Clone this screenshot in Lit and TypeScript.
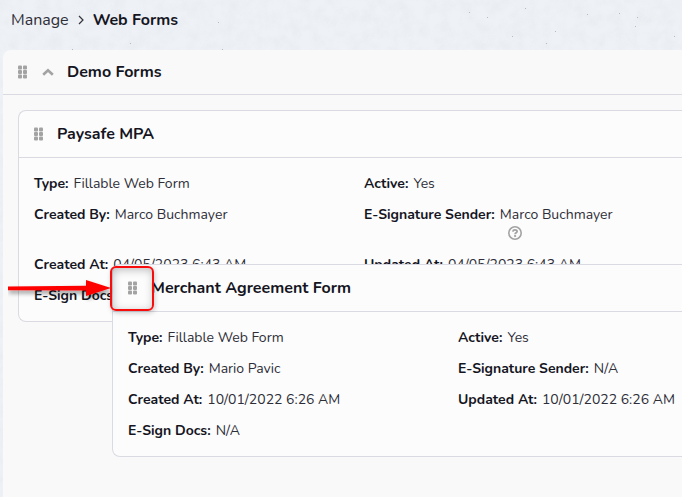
import { LitElement, html, svg, css, nothing } from "lit";
import { customElement, property } from "lit/decorators.js";

interface Field {
  label: string;
  value: string;
  help?: boolean;
}

const paysafe: Field[] = [
  { label: "Type:", value: "Fillable Web Form" },
  { label: "Active:", value: "Yes" },
  { label: "Created By:", value: "Marco Buchmayer" },
  { label: "E-Signature Sender:", value: "Marco Buchmayer", help: true },
  { label: "Created At:", value: "04/05/2023 6:43 AM" },
  { label: "Updated At:", value: "04/05/2023 6:43 AM" },
  { label: "E-Sign Docs:", value: "N/A" },
];

const merchant: Field[] = [
  { label: "Type:", value: "Fillable Web Form" },
  { label: "Active:", value: "Yes" },
  { label: "Created By:", value: "Mario Pavic" },
  { label: "E-Signature Sender:", value: "N/A" },
  { label: "Created At:", value: "10/01/2022 6:26 AM" },
  { label: "Updated At:", value: "10/01/2022 6:26 AM" },
  { label: "E-Sign Docs:", value: "N/A" },
];

const controls = css`
  button {
    display: flex;
    padding: 0;
    border: 0;
    background: none;
    color: #a3a3a3;
    cursor: pointer;
  }
  button.grip {
    cursor: grab;
  }
  h2,
  h3 {
    margin: 0;
    font-size: 16px;
    line-height: 24px;
    font-weight: 700;
    white-space: nowrap;
  }
`;

const gripIcon = html`<svg width="10" height="14" viewBox="0 0 10 14" fill="currentColor" aria-hidden="true">
  ${[0.4, 5, 9.6].map((y) => [0, 5].map((x) => svg`<rect x=${x} y=${y} width="4" height="4" rx="1" />`))}
</svg>`;

@customElement("form-card")
export class FormCard extends LitElement {
  @property() heading = "";
  @property({ attribute: false }) fields: Field[] = [];

  static styles = [
    controls,
    css`
      :host {
        display: block;
        box-sizing: border-box;
        border: 1px solid #d9dae2;
        border-right: 0;
        border-radius: 8px 0 0 8px;
        background: #fcfcfc;
      }
      header {
        display: flex;
        align-items: center;
        gap: 13px;
        height: 46px;
        padding: 0 15px;
        border-bottom: 1px solid #d9dae2;
      }
      dl {
        display: grid;
        grid-template-columns: 330px 1fr;
        row-gap: 10px;
        margin: 0;
        padding: 15px 0 15px 15px;
        font-size: 14px;
        line-height: 21px;
        white-space: nowrap;
      }
      .field {
        display: flex;
        gap: 5px;
      }
      dt {
        font-weight: 700;
      }
      dd {
        margin: 0;
        font-weight: 400;
        color: #2e2e38;
      }
      .help {
        height: 16px;
        margin: 0 0 3px 8px;
        align-items: center;
      }
    `,
  ];

  render() {
    return html`
      <header>
        <button class="grip" aria-label="Move ${this.heading}">${gripIcon}</button>
        <h3>${this.heading}</h3>
      </header>
      <dl>
        ${this.fields.map(
          (f) => html`<div class="field">
            <dt>${f.label}</dt>
            <dd>
              ${f.value}
              ${f.help
                ? html`<button class="help" aria-label="About the sender">
                    <svg width="14" height="14" viewBox="0 0 14 14" fill="none" stroke="currentColor" aria-hidden="true">
                      <circle cx="7" cy="7" r="6.2" stroke-width="1.6" />
                      <path d="M4.800 5.600C5 4.300 6 3.900 7 3.900s2.100.5 2.100 1.600c0 1.300-2 1.300-2 2.700" stroke-width="1.8" />
                      <path d="M6.100 10h2" stroke-width="1.800" />
                    </svg>
                  </button>`
                : nothing}
            </dd>
          </div>`,
        )}
      </dl>
    `;
  }
}

@customElement("app-root")
export class AppRoot extends LitElement {
  static styles = [
    controls,
    css`
      :host {
        display: flex;
        flex-direction: column;
        position: relative;
        min-height: 100vh;
        overflow: hidden;
        background: #eef1f5;
        color: #15151f;
        font-family: Nunito, "Open Sans", sans-serif;
      }
      .texture {
        position: absolute;
        inset: 0;
        width: 100%;
        height: 100%;
      }
      nav {
        position: relative;
        display: flex;
        align-items: center;
        gap: 8px;
        height: 40px;
        margin-bottom: 10px;
        padding-left: 11px;
        font-size: 16px;
      }
      nav a {
        color: #2e2e38;
        text-decoration: none;
      }
      nav span {
        font-weight: 700;
      }
      .group {
        position: relative;
        flex: 1;
        margin-left: 3px;
        border-radius: 8px 0 0 0;
        background: #f9f9f9;
      }
      .group-head {
        display: flex;
        align-items: center;
        height: 44px;
        padding-left: 15px;
        border-bottom: 1px solid #d9dae2;
      }
      .toggle {
        margin: 0 13px 0 14px;
      }
      .cards {
        padding: 15px 0 15px 15px;
      }
      .dragged {
        position: absolute;
        top: 214px;
        left: 109px;
        right: 0;
      }
      .arrow {
        position: absolute;
        top: 226px;
        left: 5px;
      }
      .marker {
        position: absolute;
        top: 216px;
        left: 107px;
        box-sizing: border-box;
        width: 44px;
        height: 45px;
        border: 2px solid #f80c0c;
        border-radius: 6px;
        box-shadow:
          inset 1px 2px 8px rgba(0, 0, 0, 0.25),
          1px 2px 5px rgba(0, 0, 0, 0.2);
        pointer-events: none;
      }
    `,
  ];

  render() {
    return html`
      <svg class="texture" aria-hidden="true">
        <filter id="mottle" x="0" y="0" width="100%" height="100%">
          <feTurbulence type="fractalNoise" baseFrequency="0.08" numOctaves="4" seed="4" />
          <feColorMatrix values="0 0 0 0 .78  0 0 0 0 .82  0 0 0 0 .86  1.300 0 0 0 -.45" />
        </filter>
        <rect width="100%" height="100%" filter="url(#mottle)" opacity=".8" />
        <g fill="#b4bac1">
          ${[[130, 43], [72, 49], [222, 49], [546, 43], [587, 14], [555, 31], [512, 36], [469, 12], [525, 8], [619, 13], [637, 17], [674, 36], [635, 26], [487, 17], [218, 22]].map(
            ([x, y]) => svg`<rect x=${x} y=${y} width="1" height="1" />`,
          )}
        </g>
      </svg>
      <nav aria-label="Breadcrumb">
        <a href="#manage">Manage</a>
        <svg width="8" height="10" viewBox="0 0 8 10" fill="none" stroke="#33343c" stroke-width="1.2" aria-hidden="true">
          <path d="M2 1l4 4-4 4" />
        </svg>
        <span aria-current="page">Web Forms</span>
      </nav>
      <section class="group">
        <div class="group-head">
          <button class="grip" aria-label="Move Demo Forms">${gripIcon}</button>
          <button class="toggle" aria-label="Collapse Demo Forms" aria-expanded="true">
            <svg width="12" height="8" viewBox="0 0 12 8" fill="none" stroke="currentColor" stroke-width="2.6" aria-hidden="true">
              <path d="M1.2 6.8L6 2.2l4.8 4.6" />
            </svg>
          </button>
          <h2>Demo Forms</h2>
        </div>
        <div class="cards">
          <form-card heading="Paysafe MPA" .fields=${paysafe}></form-card>
        </div>
        <form-card class="dragged" heading="Merchant Agreement Form" .fields=${merchant}></form-card>
        <svg class="arrow" width="106" height="30" viewBox="0 0 106 30" aria-hidden="true">
          <filter id="shade" x="-10%" y="-50%" width="120%" height="220%">
            <feDropShadow dx="1" dy="3" stdDeviation="2" flood-opacity=".4" />
          </filter>
          <path d="M0 10.500L78 9.800V4L103 12L78 20V14.500L0 14.200z" fill="#ff0000" filter="url(#shade)" />
        </svg>
        <div class="marker"></div>
      </section>
    `;
  }
}
